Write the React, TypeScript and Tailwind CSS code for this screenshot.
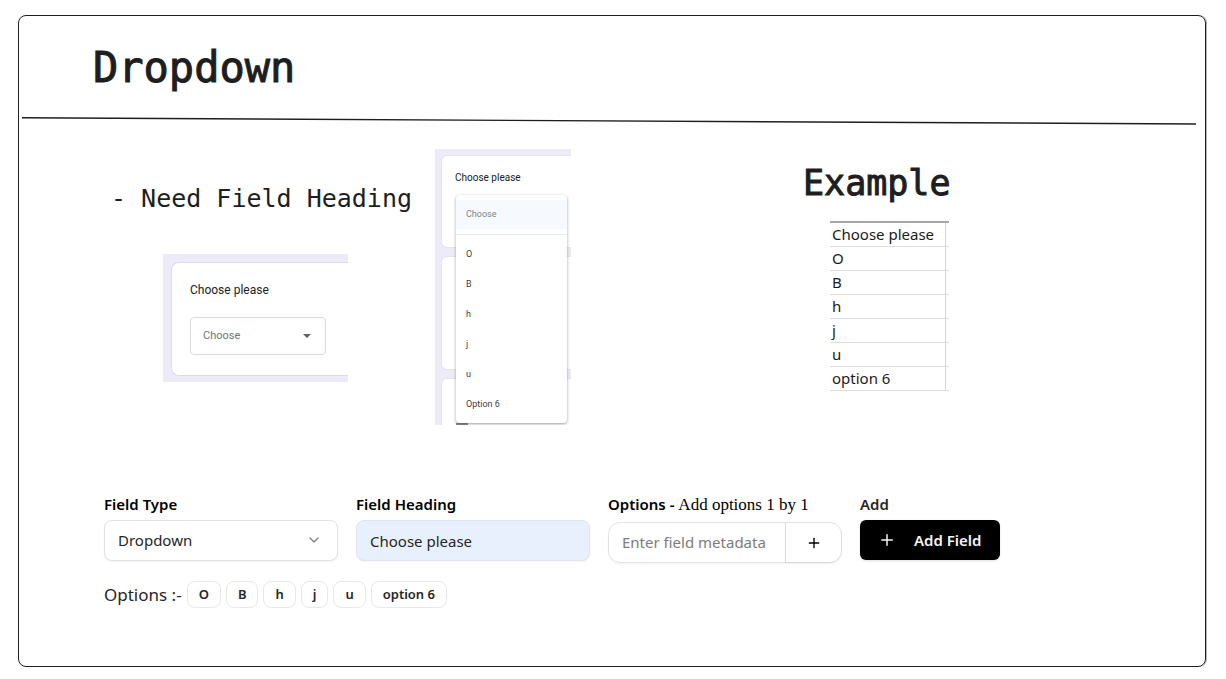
import { useState } from "react";
import { Plus, ChevronDown } from "lucide-react";

const OPTIONS = ["O", "B", "h", "j", "u"];

function SelectPreview() {
  return (
    <div className="ml-[52px] mt-[37px] w-[185px] bg-[#eeebf8] pt-2 pb-1.5 pl-2">
      <div className="rounded-l-lg border border-r-0 border-[#dedbe8] bg-white pt-[18px] pb-5 pl-[18px] font-['Roboto',sans-serif]">
        <label htmlFor="preview" className="block text-[12px] leading-[18px] text-[#202124]">
          Choose please
        </label>
        <div className="relative mt-[18px] w-[136px]">
          <select
            id="preview"
            className="block h-[38px] w-full appearance-none rounded border border-[#dadce0] bg-white px-3 text-[11px] text-[#70757a]"
          >
            <option>Choose</option>
          </select>
          <svg viewBox="0 0 8 4" className="pointer-events-none absolute top-[17px] right-[15px] h-1 w-2 fill-[#5f6368]">
            <path d="M0 0h8L4 4z" />
          </svg>
        </div>
      </div>
    </div>
  );
}

function MenuPreview() {
  return (
    <div className="relative flex h-[276px] w-[136px] flex-col gap-2 overflow-hidden bg-[#eeebf8] pt-1.5 pl-1.5 font-['Roboto',sans-serif]">
      <div className="h-[93px] shrink-0 rounded-l-md border border-r-0 border-[#e6e3f0] bg-white pt-3.5 pl-[13px] text-[10px] leading-[16px] text-[#202124]">
        Choose please
      </div>
      <div className="h-[114px] shrink-0 rounded-l-md border border-r-0 border-[#e6e3f0] bg-white" />
      <div className="h-16 shrink-0 rounded-l-md border border-r-0 border-[#e6e3f0] bg-white" />
      <div className="absolute bottom-0 left-[21px] h-0.5 w-3 bg-[#85888c]" />
      <ul className="absolute top-[46px] left-[21px] w-[111px] rounded-sm bg-white pt-[5px] pb-1 text-[9px] text-[#3c4043] shadow-[0_1px_3px_rgba(60,64,67,0.5)]">
        <li className="bg-[#f6f9fe] pl-2.5 leading-[29px] text-[#80868b]">Choose</li>
        <li className="mt-[5px] mb-1 border-t border-[#e8eaed]" />
        {[...OPTIONS, "Option 6"].map((o) => (
          <li key={o} className="pl-2.5 leading-[30px]">
            {o}
          </li>
        ))}
      </ul>
    </div>
  );
}

function ExampleTable() {
  return (
    <table className="ml-[27px] mt-3.5 w-[119px] border-collapse font-['Noto_Sans',sans-serif] text-[15px] text-[#1b1b1b]">
      <tbody>
        {["Choose please", ...OPTIONS, "option 6"].map((o, i) => (
          <tr key={o} className={i === 0 ? "border-t-2 border-b border-t-[#a6a6a6] border-b-[#dcdcdc]" : "border-b border-[#dcdcdc]"}>
            <td className="h-6 border-r border-[#d6d6d6] p-0 pl-0.5 leading-[23px] whitespace-nowrap">{o}</td>
            <td className="w-1 p-0" />
          </tr>
        ))}
      </tbody>
    </table>
  );
}

export default function App() {
  const [heading, setHeading] = useState("Choose please");
  return (
    <div className="flex min-h-screen flex-col bg-white pt-[15px] pr-5 pb-3 pl-[18px]">
      <main className="grow rounded-lg border border-[#1e1e1e] pb-14 text-[#1e1e1e] shadow-[1px_0_0_#b5b5b5]">
        <h1 className="pt-6 pb-[21px] pl-[74px] font-['DejaVu_Sans_Mono',monospace] text-[42px] leading-[56px] [-webkit-text-stroke:1px_#1e1e1e]">
          Dropdown
        </h1>
        <svg viewBox="0 0 1176 8" preserveAspectRatio="none" className="ml-[3px] block h-2 w-[99%]">
          <path d="M0 0.8L1176 7" stroke="#1e1e1e" strokeWidth="1.4" />
        </svg>

        <section className="flex items-start pt-6 pl-[92px]">
          <div className="w-[324px] shrink-0 pt-8">
            <h2 className="font-['DejaVu_Sans_Mono',monospace] text-[25px] leading-[36px] whitespace-pre">- Need Field Heading</h2>
            <SelectPreview />
          </div>
          <MenuPreview />
          <div className="ml-[232px] pt-2.5">
            <h2 className="font-['DejaVu_Sans_Mono',monospace] text-[35px] leading-[48px] [-webkit-text-stroke:1px_#1e1e1e]">
              Example
            </h2>
            <ExampleTable />
          </div>
        </section>

        <form
          onSubmit={(e) => e.preventDefault()}
          className="mt-[67px] pl-[85px] font-['Noto_Sans',sans-serif] text-[15px] text-[#262626]"
        >
          <div className="flex items-start gap-[18px]">
            <div className="w-[234px]">
              <label htmlFor="type" className="block leading-6 font-semibold text-black">
                Field Type
              </label>
              <div className="relative mt-1">
                <select
                  id="type"
                  className="block h-[41px] w-full appearance-none rounded-lg border border-[#e2e2e2] bg-white px-[13px] shadow-xs"
                >
                  <option>Dropdown</option>
                </select>
                <ChevronDown className="pointer-events-none absolute top-3 right-4 size-4 text-[#808080]" strokeWidth={2} />
              </div>
            </div>
            <div className="w-[234px]">
              <label htmlFor="heading" className="block leading-6 font-semibold text-black">
                Field Heading
              </label>
              <input
                id="heading"
                value={heading}
                onChange={(e) => setHeading(e.target.value)}
                className="mt-1 block h-[41px] w-full rounded-lg border border-[#e0e4ec] bg-[#e8f0fe] px-[13px] shadow-xs"
              />
            </div>
            <div className="w-[234px]">
              <label htmlFor="meta" className="block leading-6 font-semibold whitespace-nowrap text-black">
                Options - <span className="font-['Liberation_Serif',serif] text-[17px] font-normal">Add options 1 by 1</span>
              </label>
              <div className="mt-[5px] flex h-[41px] rounded-xl border border-[#e2e2e2] shadow-xs">
                <input
                  id="meta"
                  placeholder="Enter field metadata"
                  className="w-0 grow rounded-l-xl px-[13px] placeholder:text-[#7c7c7c]"
                />
                <button type="button" aria-label="Add option" className="grid w-14 place-items-center rounded-r-xl border-l border-[#dcdcdc] shadow-xs">
                  <Plus className="size-4 text-black" strokeWidth={2} />
                </button>
              </div>
            </div>
            <div className="w-[140px]">
              <label htmlFor="add" className="block leading-6 font-semibold">
                Add
              </label>
              <button
                id="add"
                type="submit"
                className="mt-1 flex h-10 w-full items-center gap-[18px] rounded-md bg-black pl-[18px] font-semibold whitespace-nowrap text-[#f5f5f5] shadow-sm"
              >
                <Plus className="size-[18px]" strokeWidth={2} />
                Add Field
              </button>
            </div>
          </div>

          <div className="mt-[18px] flex items-center gap-[5px]">
            <span className="text-[17px] leading-6">Options :-</span>
            {[...OPTIONS, "option 6"].map((o) => (
              <span key={o} className="rounded-lg border border-[#e8e8e8] px-[11px] text-[13px] leading-[25px] font-semibold">
                {o}
              </span>
            ))}
          </div>
        </form>
      </main>
    </div>
  );
}
